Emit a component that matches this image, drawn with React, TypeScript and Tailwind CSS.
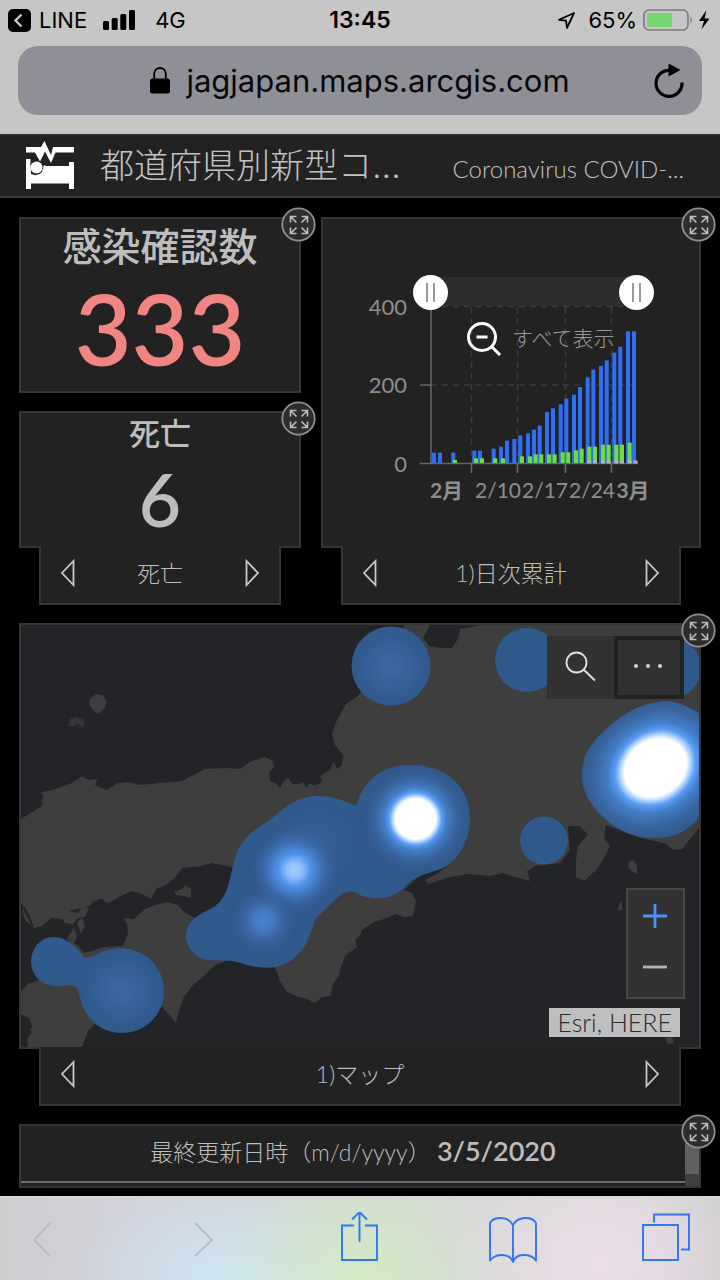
import type { ReactNode } from "react";

function StatusBar() {
  return (
    <div className="grid h-10 grid-cols-3 items-center px-2 text-[22px] leading-10 text-black">
      <div className="flex items-center">
        <svg viewBox="0 0 23 23" className="size-[23px]" aria-hidden="true">
          <rect width="23" height="23" rx="5" fill="#000" />
          <path d="M13.5 5.5 7.5 11.5l6 6" fill="none" stroke="#c9c9c9" strokeWidth="2.4" />
        </svg>
        <span className="ml-2">LINE</span>
        <svg viewBox="0 0 32 20" className="ml-4 h-5 w-8" aria-hidden="true">
          <rect x="0" y="11" width="6" height="9" rx="1.5" />
          <rect x="8.700" y="8" width="6" height="12" rx="1.500" />
          <rect x="17.300" y="4" width="6" height="16" rx="1.500" />
          <rect x="26" y="0" width="6" height="20" rx="1.500" />
        </svg>
        <span className="ml-5">4G</span>
      </div>
      <div className="text-center text-[23px] font-semibold">13:45</div>
      <div className="flex items-center justify-end">
        <svg viewBox="0 0 19 19" className="size-[19px]" aria-hidden="true">
          <path d="M17 2 2 8.800l7 .9L10 17Z" fill="none" stroke="#000" strokeWidth="1.800" strokeLinejoin="round" />
        </svg>
        <span className="ml-3">65%</span>
        <svg viewBox="0 0 69 22" className="ml-1.5 h-[22px] w-[69px]" aria-hidden="true">
          <rect x="1" y="1" width="44" height="20" rx="5" fill="none" stroke="#7b7b7b" strokeWidth="1.600" />
          <rect x="4" y="4" width="25" height="14" rx="1" fill="#76d672" />
          <path d="M47.500 7.500q3 3.500 0 7z" fill="#7b7b7b" />
          <path d="M63.500 1 56 12h5l-2.500 8.500 8-11h-5z" fill="#000" />
        </svg>
      </div>
    </div>
  );
}

function AddressBar() {
  return (
    <div className="px-[18px] pt-1.5 pb-[19px]">
      <div className="relative flex h-[69px] items-center justify-center rounded-[20px] bg-[#8f9097]">
        <button type="button" className="flex items-center gap-4 text-[31px] leading-9 text-[#08080a]">
          <svg viewBox="0 0 20 27" className="h-[27px] w-5" aria-hidden="true">
            <rect x="0" y="11.500" width="20" height="15" rx="2.500" fill="#000" />
            <path d="M4.200 12V6.800a5.800 5.800 0 0 1 11.600 0V12" fill="none" stroke="#000" strokeWidth="1.900" />
          </svg>
          jagjapan.maps.arcgis.com
        </button>
        <button type="button" aria-label="再読み込み" className="absolute right-[15px] size-9">
          <svg viewBox="0 0 36 36" className="size-9">
            <path d="M18.500 7.300A13 13 0 1 0 31 19.500" fill="none" stroke="#000" strokeWidth="3.200" />
            <path d="M17.500 .5v13l12-6.500z" fill="#000" />
          </svg>
        </button>
      </div>
    </div>
  );
}

function Header() {
  return (
    <header className="flex h-16 items-center border-t border-b-2 border-t-[#303030] border-b-[#3a3a3a] bg-[#222] px-[26px] text-[#c3c3c3]">
      <svg viewBox="0 0 48 49" className="h-[49px] w-12 shrink-0" aria-hidden="true">
        <path d="M0 6h15L18.500 0 25 14l2-8H48v5.500H29.500L25 22l-6-11.500-5 10-5-9H0z" fill="#fff" />
        <path d="M0 18h4.500v6H18l2 1h23v-4h5v27h-5v-5.500H5V48H0z" fill="#fff" />
        <path d="M4.500 22H18.500L16 31Q12 36 5 33z" fill="#222" />
        <circle cx="10.500" cy="26.500" r="6" fill="#fff" />
      </svg>
      <h1 className="ml-[26px] shrink-0 font-['Inter','Noto_Sans_CJK_JP',sans-serif] text-[34px] leading-10 font-light">
        都道府県別新型コ...
      </h1>
      <p className="mt-1.5 mr-2.5 ml-auto text-[24px] leading-8 font-light whitespace-nowrap">Coronavirus COVID-...</p>
    </header>
  );
}

function ExpandButton() {
  return (
    <button type="button" aria-label="展開" className="absolute -top-3 -right-[17px] z-10 size-[35px]">
      <svg viewBox="0 0 35 35" className="size-[35px]">
        <circle cx="17.500" cy="17.500" r="16.200" fill="#2d2d2d" stroke="#8f8f8f" strokeWidth="1.800" />
        <path
          d="M9.500 15.500v-6h6M9.500 9.500l6 6M20.500 9.500h6v6M26.500 9.500l-6 6M9.500 20.500v6h6M9.500 26.500l6-6M20.500 26.500h6v-6M26.500 26.500l-6-6"
          fill="none"
          stroke="#bdbdbd"
          strokeWidth="1.600"
        />
      </svg>
    </button>
  );
}

function Card({ children, className }: { children: ReactNode; className: string }) {
  return (
    <section className={`relative border-2 border-[#363636] bg-[#222] ${className}`}>
      <ExpandButton />
      {children}
    </section>
  );
}

function Pager({ label }: { label: string }) {
  return (
    <nav className="relative mx-5 -mt-0.5 flex h-[59px] items-center justify-between border-x-2 border-b-2 border-[#363636] bg-[#222] px-[18px] pb-1 text-[#bdbdbd]">
      <button type="button" aria-label="前へ">
        <svg viewBox="0 0 18 28" className="h-7 w-[18px]">
          <path d="M14.500 2v24L3 14z" fill="none" stroke="#c8c8c8" strokeWidth="1.800" />
        </svg>
      </button>
      <span className="text-[23px] leading-8 font-light">{label}</span>
      <button type="button" aria-label="次へ">
        <svg viewBox="0 0 18 28" className="h-7 w-[18px]">
          <path d="M3.500 2v24L15 14z" fill="none" stroke="#c8c8c8" strokeWidth="1.800" />
        </svg>
      </button>
    </nav>
  );
}

const confirmed = [
  [432, 31], [438, 31], [451.300, 31], [472.300, 37], [478, 37], [491.700, 43], [499, 49], [505, 67], [512.300, 72],
  [518.300, 83], [526, 89], [532, 100], [537.700, 112], [545, 153], [551, 164], [558.700, 176], [564.300, 193],
  [572, 205], [578, 228], [585.700, 257], [591.300, 280], [599, 291], [604.700, 308], [612.300, 331], [618.300, 349],
  [626, 395], [632, 395],
];
const recovered = [
  [453, 9], [474, 14], [480, 14], [493.300, 14], [501, 14], [520, 20], [528, 20], [533.700, 26], [539.300, 26],
  [547, 26], [552.700, 26], [560.700, 32], [566.300, 32], [574, 38], [579.700, 43], [587.300, 49], [593, 49],
  [601, 55], [606.700, 55], [614.300, 55], [620, 55], [627.700, 61],
];
const deaths = [587.300, 593, 601, 606.700, 614.300, 620, 627.700, 633.500];

const thumb =
  "pointer-events-none absolute top-[17%] right-[12%] left-[24%] h-[35px] appearance-none bg-transparent [&::-webkit-slider-thumb]:pointer-events-auto [&::-webkit-slider-thumb]:size-[35px] [&::-webkit-slider-thumb]:appearance-none [&::-webkit-slider-thumb]:rounded-full [&::-webkit-slider-thumb]:bg-white [&::-webkit-slider-thumb]:bg-[linear-gradient(90deg,transparent_13px,#999_13px,#999_15px,transparent_15px,transparent_20px,#999_20px,#999_22px,transparent_22px)] [&::-webkit-slider-thumb]:bg-[length:35px_19px] [&::-webkit-slider-thumb]:bg-center [&::-webkit-slider-thumb]:bg-no-repeat";

function DailyChart() {
  return (
    <div className="relative">
      <svg viewBox="323 219 376 327" className="block h-auto w-full" role="img" aria-label="日次累計">
        <rect x="431" y="277" width="207" height="29" fill="#2d2d2d" />
        <g stroke="#3c3c3c" strokeWidth="1.500" strokeDasharray="6 5">
          <path d="M431 306.500H638M431 385H638M471.500 307V463M517.500 307V463M565.500 307V463M611.500 307V463" fill="none" />
        </g>
        <g stroke="#666" strokeWidth="1.600" fill="none">
          <path d="M431 300V464M420 385h11M419.500 463.500H638M471.500 464v9M517.500 464v9M565.500 464v9M611.500 464v9" />
        </g>
        {confirmed.map(([x, h]) => (
          <rect key={x} x={x} y={463 - h / 3} width="4" height={h / 3} fill="#2f6ef7" />
        ))}
        {recovered.map(([x, h]) => (
          <rect key={x} x={x} y={463 - h / 3} width="4" height={h / 3} fill="#6fdd35" />
        ))}
        {deaths.map((x) => (
          <rect key={x} x={x} y="460.500" width="4" height="3" fill="#b9b0b9" />
        ))}
        <g fill="#8e8e8e" fontSize="22" textAnchor="end">
          <text x="407" y="315">400</text>
          <text x="407" y="393">200</text>
          <text x="407" y="472">0</text>
        </g>
        <g fill="#8e8e8e" fontSize="21" textAnchor="middle">
          <text x="446.500" y="498" fontWeight="700">2月</text>
          <text x="498" y="498">2/10</text>
          <text x="545" y="498">2/17</text>
          <text x="592" y="498">2/24</text>
          <text x="633" y="498" fontWeight="700">3月</text>
        </g>
      </svg>
      <input type="range" aria-label="開始日" defaultValue={0} className={thumb} />
      <input type="range" aria-label="終了日" defaultValue={100} className={thumb} />
      <button
        type="button"
        className="absolute top-[31%] left-[38%] flex items-center gap-2.5 text-[21px] leading-8 font-light text-[#999]"
      >
        <svg viewBox="0 0 36 36" className="size-9" aria-hidden="true">
          <circle cx="16" cy="17" r="13.500" fill="none" stroke="#fff" strokeWidth="3" />
          <path d="M10.500 17h11M25.500 26.500 34 35" stroke="#fff" strokeWidth="3" />
        </svg>
        すべて表示
      </button>
    </div>
  );
}

function HeatMap() {
  return (
    <div className="relative">
      <svg viewBox="21 625 678 422" className="block h-auto w-full" role="img" aria-label="感染者マップ">
        <defs>
          <radialGradient id="soft">
            <stop offset="0" stopColor="#3d69a3" />
            <stop offset="1" stopColor="#30598c" />
          </radialGradient>
          <radialGradient id="glow">
            <stop offset="0" stopColor="#fff" />
            <stop offset=".36" stopColor="#fff" />
            <stop offset=".41" stopColor="#b4d6ff" />
            <stop offset=".47" stopColor="#5a9df5" />
            <stop offset=".56" stopColor="#437dc9" />
            <stop offset=".72" stopColor="#38669f" />
            <stop offset="1" stopColor="#30598c" stopOpacity="0" />
          </radialGradient>
          <radialGradient id="spot">
            <stop offset="0" stopColor="#a5ceff" />
            <stop offset=".16" stopColor="#8fc0ff" />
            <stop offset=".36" stopColor="#5190e8" />
            <stop offset=".6" stopColor="#3e70b4" />
            <stop offset="1" stopColor="#30598c" stopOpacity="0" />
          </radialGradient>
          <radialGradient id="dim">
            <stop offset="0" stopColor="#4a85d4" />
            <stop offset=".3" stopColor="#4377be" />
            <stop offset="1" stopColor="#30598c" stopOpacity="0" />
          </radialGradient>
        </defs>
        <rect x="21" y="625" width="678" height="422" fill="#222428" />
        <g fill="#3e3e3f">
          <path d="M21 819 42 806 43 795 40 793 55 789 72 783 82 776 88 780 97 779 95 785 101 788 107 790 118 783 128 782 140 785 160 783 182 781 205 769 225 768 240 769 252 761 265 757 273 761 274 767 269 773 270 781 277 784 280 788 283 782 288 777 292 784 298 784 303 782 306 788 310 783 314 786 322 782 320 776 330 770 334 761 337 769 342 765 343 755 335 745 332 734 337 720 346 704 358 696 375 670 405 625H699V828L691 838 682 849 673 850 666 844 655 841 640 838 624 832 606 825 604 838 610 846 603 860 596 870 584 881 576 877 576 860 578 846 588 835 580 826 568 826 570 850 560 863 535 866 527 871 530 881 515 877 503 873 490 876 468 874 450 877 428 884 425 880 440 872 452 862 440 860 415 880 404 890 412 893 416 901 413 916 404 917 395 914 384 919 374 922 362 930 360 936 355 940 357 947 346 955 342 964 339 975 332 986 331 996 322 997 315 1003 307 999 298 997 287 992 280 981 276 970 258 950 262 880 231 867 212 863 202 866 182 868 175 878 166 885 156 889 151 899 142 894 131 891 119 897 108 904 97 901 87 907 72 910 62 919 51 918 42 926 34 928 29 914 24 906 21 903Z" />
          <path d="M76 944 84 953 105 947 123 946 128 934 127 924 123 918 134 919 145 909 155 905 168 902 178 905 184 912 195 918 220 940 228 960 214 966 206 974 193 985 184 997 179 1010 176 1023 171 1017 162 1007 120 985 84 965Z" />
          <path d="M21 992 28 984 45 978 72 978 85 1000 97 1022 88 1031 82 1047H28L25 1040 32 1026 29 1018 21 1014Z" />
          <path d="m90 699 6-5 7 1 4 7-3 7-6 5-5-4-4-5z" />
          <path d="M68 726l2-7 6-2 7 2 2 5-3 4-4-5-4 3z" opacity=".7" />
          <path d="m67 938 7-10 3 9-3 6 6 4-5 5zM60 916l8-5 10 2 4-6 7 1-4 9-7 1-5 6-8-1zM77 922l5-4 3 8-4 8zM174 892l8-3 3-4 6 4v9l-7-2-8-1zM22 908l6 10 4 8-7-6zM155 882l8-3 3 4-7 5zM629 861l5-1 3 6v8l-4-2-5-5zM617 910l4-10 2 10zM665 1038l7-1 2 6-6 1z" />
        </g>
        <path d="M430 625 423 638 429 646 441 648 452 648 458 639 460 629 482 625Z" fill="#222428" />
        <g fill="#222428">
          <path d="m21 1020 5-2 5 5-3 5 4 4-5 6 1 8h-7zM92 902l10-4 4 5 10-3-4 8-9 2-8 6-6-6zM130 893l8 3 10 2 6 5-12 5-9-1z" />
        </g>
        <g fill="#30598c">
          <path d="M318 796C335 796 350 803 356 806C364 780 382 765 410 765C445 765 470 785 470 819C470 842 455 866 438 870C420 875 410 880 405 887C396 897 380 901 362 896C350 887 342 893 335 900L316 918C310 930 308 960 275 967C255 970 240 962 232 961L207 960C194 958 186 946 186 935C187 920 200 914 212 908C232 898 230 865 239 848C248 830 265 825 276 815C288 804 300 796 318 796Z" />
          <path d="M665 701C680 702 690 708 699 713V817C690 830 675 838 655 838C635 838 625 832 614 826C595 812 582 795 582 775C582 755 592 742 604 731C620 717 635 704 665 701Z" />
          <path d="M53 937C69 937 78 950 84 957C90 960 97 953 108 950C137 942 164 962 164 991C164 1015 145 1033 122 1033C96 1033 82 1013 79 993C76 982 70 986 56 986C42 986 31 975 31 962C31 948 41 937 53 937Z" />
          <circle cx="527" cy="660" r="32" />
          <circle cx="544" cy="840.500" r="24" />
          <circle cx="670" cy="668" r="31" />
        </g>
        <circle cx="391" cy="666" r="39.500" fill="url(#soft)" />
        <circle cx="122" cy="991" r="41" fill="url(#soft)" />
        <ellipse cx="315" cy="845" rx="50" ry="42" fill="url(#soft)" opacity=".5" />
        <circle cx="415.500" cy="819" r="56" fill="url(#glow)" />
        <circle cx="294.500" cy="870" r="46" fill="url(#spot)" />
        <circle cx="263.500" cy="921" r="36" fill="url(#dim)" />
        <clipPath id="east">
          <path d="M665 701C680 702 690 708 699 713V817C690 830 675 838 655 838C635 838 625 832 614 826C595 812 582 795 582 775C582 755 592 742 604 731C620 717 635 704 665 701Z" />
        </clipPath>
        <g clipPath="url(#east)">
          <ellipse cx="655.500" cy="768" rx="90" ry="76" transform="rotate(-35 655 768)" fill="url(#glow)" />
        </g>
      </svg>
      <div className="absolute top-[11px] right-[15px] flex h-[63px] border-l-2 border-[#303030]">
        <button type="button" aria-label="検索" className="flex w-[65px] items-center justify-center bg-[#323232] pr-1 pb-1">
          <svg viewBox="0 0 32 32" className="size-8">
            <circle cx="12.500" cy="12.500" r="10" fill="none" stroke="#e2e2e2" strokeWidth="1.800" />
            <path d="M19.500 19.500 31 30.500" stroke="#e2e2e2" strokeWidth="1.900" />
          </svg>
        </button>
        <button
          type="button"
          aria-label="その他"
          className="flex w-[70px] items-center justify-center border-4 border-[#222] bg-[#323232] pr-0.5 pb-1"
        >
          <svg viewBox="0 0 28 4" className="h-1 w-7" fill="#d6d6d6">
            <circle cx="2" cy="2" r="2" />
            <circle cx="14" cy="2" r="2" />
            <circle cx="26" cy="2" r="2" />
          </svg>
        </button>
      </div>
      <div className="absolute right-[14px] bottom-12 flex h-[111px] w-[59px] flex-col border-2 border-[#484848] bg-[#323232] pr-0.5 pb-1">
        <button type="button" aria-label="拡大" className="flex flex-1 items-center justify-center">
          <svg viewBox="0 0 24 24" className="size-6">
            <path d="M12 0v24M0 12h24" stroke="#4b93f5" strokeWidth="2.800" />
          </svg>
        </button>
        <button type="button" aria-label="縮小" className="flex flex-1 items-center justify-center">
          <svg viewBox="0 0 24 24" className="size-6">
            <path d="M0 12h24" stroke="#b5b5b5" strokeWidth="2.800" />
          </svg>
        </button>
      </div>
      <div className="absolute right-[19px] bottom-2.5 bg-[#bfbfbf] px-2 text-[25px] leading-[29px] font-light text-[#2b2b2b]">
        Esri, HERE
      </div>
    </div>
  );
}

const toolIcon = "block h-[52px] w-12";

function BrowserToolbar() {
  return (
    <div className="grid h-[85px] grow grid-cols-[161fr_147fr_148fr_153fr_78fr] items-center justify-items-start border-t-2 border-[#d8d8d8] bg-[radial-gradient(140px_110px_at_355px_95%,#d2eac6_0%,transparent_100%),radial-gradient(150px_100px_at_225px_100%,#cde5f4_0%,transparent_100%),radial-gradient(150px_110px_at_600px_75%,#ecdde7_0%,transparent_100%),linear-gradient(90deg,#cdcdcf,#d2d3dd_20%,#d2d8da_38%,#d2dbce_50%,#d8dbd8_65%,#d9d7d9_90%,#cfcfd1)] pb-1 pl-[33px]">
      <button type="button" aria-label="戻る" disabled>
        <svg viewBox="0 0 48 52" className={toolIcon} fill="none" stroke="#b9bec8" strokeWidth="2.400">
          <path d="M17 11 1.500 28 17 44" />
        </svg>
      </button>
      <button type="button" aria-label="進む" disabled>
        <svg viewBox="0 0 48 52" className={toolIcon} fill="none" stroke="#b9bec8" strokeWidth="2.400">
          <path d="M1 11 18 28 1 44" />
        </svg>
      </button>
      <button type="button" aria-label="共有">
        <svg viewBox="0 0 48 52" className={toolIcon} fill="none" stroke="#2f77f6" strokeWidth="1.900">
          <path d="M13 13.500H1V48h35V13.500H24M18.500 30V0.500M11 7.500 18.500 0l7.500 7.500" />
        </svg>
      </button>
      <button type="button" aria-label="ブックマーク">
        <svg viewBox="0 0 48 52" className={toolIcon} fill="none" stroke="#2f77f6" strokeWidth="1.900">
          <path
            d="M1 11C5 4 20 4 24 13.500C28 4 43 4 47 11V48.500C41 41 27 41 24 50C21 41 7 41 1 48.500ZM24 13V50"
            strokeLinejoin="round"
          />
        </svg>
      </button>
      <button type="button" aria-label="タブ">
        <svg viewBox="0 0 48 52" className={toolIcon} fill="none" stroke="#2f77f6" strokeWidth="1.900">
          <path d="M1 13h35v35H1zM12 10.500V2.500h35V37.500H39" />
        </svg>
      </button>
    </div>
  );
}

export default function App() {
  return (
    <div className="flex min-h-screen flex-col bg-black font-['Inter','Noto_Sans_CJK_JP',sans-serif]">
      <div className="bg-[#c6c6c6]">
        <StatusBar />
        <AddressBar />
      </div>
      <div className="font-['Lato','Noto_Sans_CJK_JP',sans-serif]">
        <Header />
        <main className="flex flex-col gap-[18px] px-[19px] pt-[19px] pb-2">
          <div className="grid grid-cols-[282fr_380fr] gap-5">
            <div className="flex flex-col">
              <Card className="h-[176px] text-center">
                <h2 className="pt-1 text-[39px] leading-[46px] font-medium text-[#bdbdbd]">感染確認数</h2>
                <p className="mt-1 text-[98px] leading-[110px] font-semibold text-[#f08582]">333</p>
              </Card>
              <Card className="mt-[18px] h-[137px] grow text-center">
                <h2 className="text-[31px] leading-10 font-medium text-[#bdbdbd]">死亡</h2>
                <p className="mt-1 text-[73px] leading-[84px] font-semibold text-[#bdbdbd]">6</p>
              </Card>
              <Pager label="死亡" />
            </div>
            <div className="flex flex-col">
              <Card className="grow">
                <DailyChart />
              </Card>
              <Pager label="1)日次累計" />
            </div>
          </div>
          <div>
            <Card className="">
              <HeatMap />
            </Card>
            <Pager label="1)マップ" />
          </div>
          <Card className="h-[64px]">
            <div className="flex h-full">
              <div className="mb-[3px] flex grow items-center justify-center border-b-2 border-[#6b6b6b] pb-1 text-[#bdbdbd]">
                <p className="text-[23px] leading-8 whitespace-pre">
                  <span className="font-light">最終更新日時（m/d/yyyy） </span>
                  <strong className="text-[27px] font-semibold">3/5/2020</strong>
                </p>
              </div>
              <div className="w-3.5 bg-[#414141] pb-3">
                <div className="h-full bg-[#606060]" />
              </div>
            </div>
          </Card>
        </main>
      </div>
      <BrowserToolbar />
    </div>
  );
}
